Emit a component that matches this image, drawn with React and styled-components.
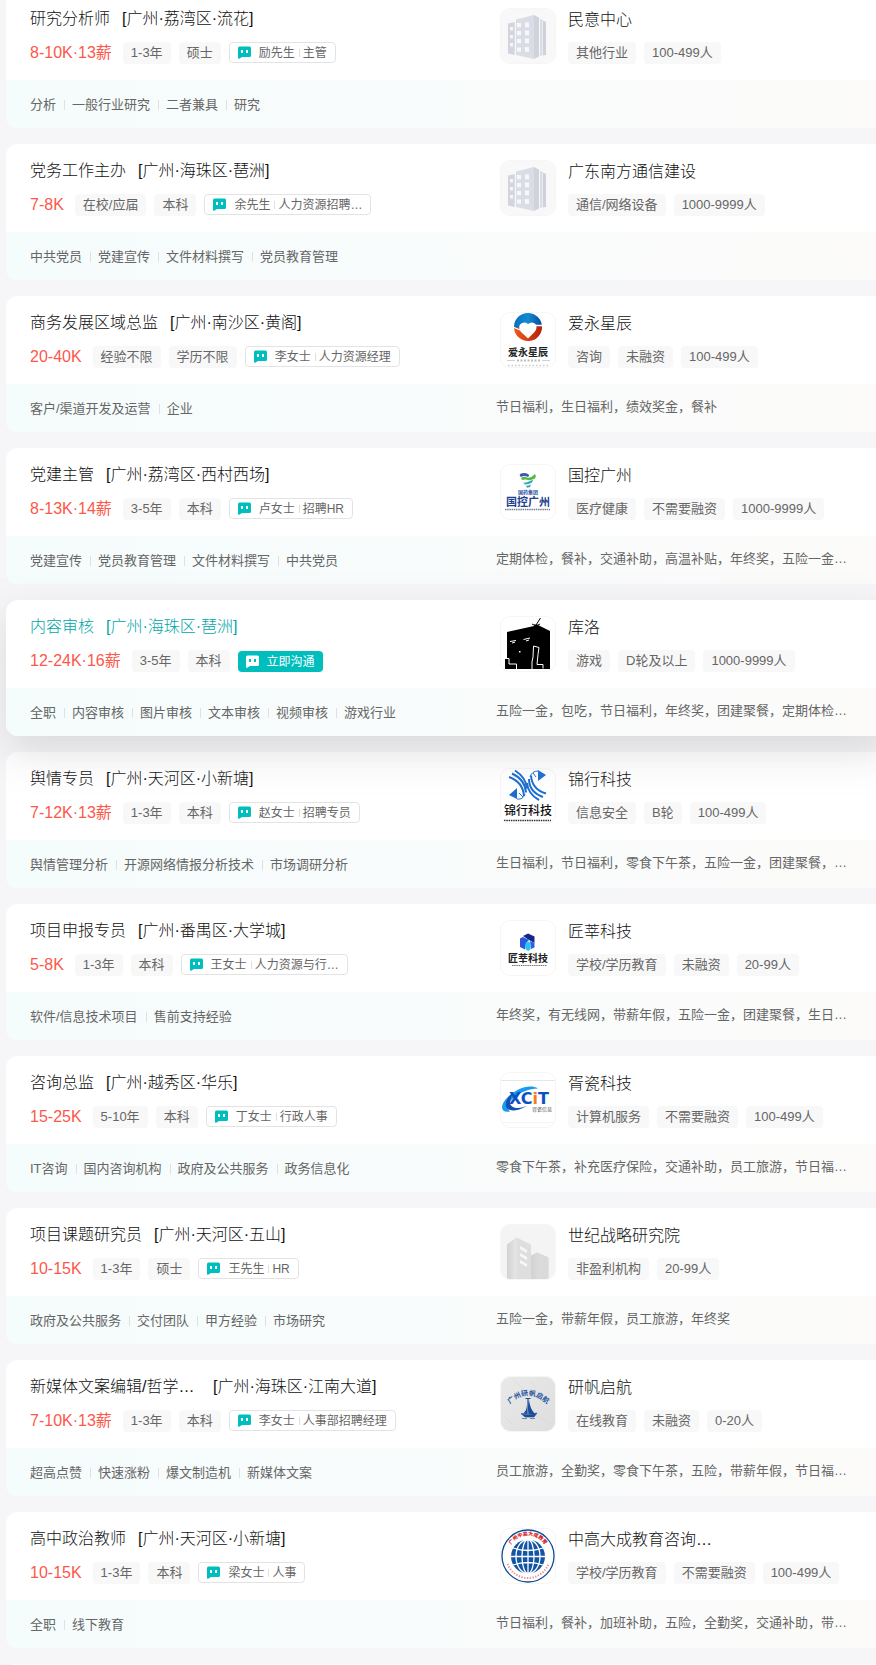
import React from "react";
import styled, { createGlobalStyle, css } from "styled-components";

const SANS = `"Liberation Sans", "Noto Sans CJK SC", sans-serif`;

const GlobalStyle = createGlobalStyle`
  *, *::before, *::after { box-sizing: border-box; }
  body {
    margin: 0;
    background: #f6f6f8;
    color: #222;
    font-family: ${SANS};
    font-size: 13px;
  }
  a { color: inherit; text-decoration: none; }
  ul { margin: 0; padding: 0; list-style: none; }
  button { font-family: inherit; }
`;

const Page = styled.main`
  overflow: hidden;
`;

const JobList = styled.ul`
  display: flex;
  flex-direction: column;
  gap: 16px;
  margin: -8px -14px 0 6px;
`;

const Card = styled.li`
  border-radius: 12px;
  background: #fff;
  ${(p) =>
    p.$active &&
    css`
      position: relative;
      z-index: 1;
      box-shadow: 0 16px 40px rgba(153, 153, 153, 0.3);
    `}
`;

const NextCardEdge = styled.li`
  height: 1px;
  margin: 0 6px;
  background: #fff;
`;

const CardBody = styled.div`
  display: grid;
  grid-template-columns: 470px minmax(0, 1fr);
  padding: 16px 24px;
`;

const CardFooter = styled.div`
  display: grid;
  grid-template-columns: 466px minmax(0, 1fr);
  height: 48px;
  padding: 0 24px;
  border-radius: 0 0 12px 12px;
  background: linear-gradient(90deg, #f5fcfc 0%, #fcfbfa 100%);
  color: #666;
`;

const JobTitle = styled.a`
  display: flex;
  gap: 12px;
  height: 22px;
  margin-bottom: 12px;
  font-size: 16px;
  font-weight: 300;
  line-height: 22px;
  white-space: nowrap;
  color: ${(p) => (p.$active ? "#00a6a7" : "#111")};
`;

const JobName = styled.span`
  ${(p) => p.$clipped && "width: 171px;"}
`;

const Row = styled.div`
  display: flex;
  align-items: flex-start;
  gap: 8px;
  height: 22px;
  white-space: nowrap;
`;

const Salary = styled.span`
  margin-right: 3px;
  font-size: 16px;
  line-height: 22px;
  color: #fe574a;
`;

const Tag = styled.span`
  height: 22px;
  padding: 0 8px;
  border-radius: 4px;
  background: #f8f8f8;
  color: #666;
  font-size: 13px;
  line-height: 22px;
`;

const ChatButton = styled.button`
  display: flex;
  align-items: center;
  height: 21px;
  padding: 0 8px;
  border: 1px solid #e3e3e3;
  border-radius: 4px;
  background: #fff;
  color: #666;
  font-size: 12px;
  line-height: 18px;
  cursor: pointer;
  svg {
    margin-right: 8px;
    color: #00bebd;
  }
  ${(p) =>
    p.$active &&
    css`
      align-self: flex-end;
      border: 0;
      background: #00bebd;
      color: #fff;
      svg {
        color: #fff;
      }
    `}
`;

const RecruiterRole = styled.span`
  display: flex;
  align-items: center;
  &::before {
    content: "";
    width: 1px;
    height: 8px;
    margin: 0 3px 0 4px;
    background: #e0e0e0;
  }
`;

const Skills = styled.ul`
  display: flex;
  padding-top: 1px;
  line-height: 48px;
  white-space: nowrap;
`;

const Skill = styled.li`
  display: flex;
  align-items: center;
  & + &::before {
    content: "";
    width: 1px;
    height: 10px;
    margin: 0 7px 0 8px;
    background: #e0e0e0;
  }
`;

const Benefits = styled.div`
  overflow: hidden;
  line-height: 46px;
  white-space: nowrap;
`;

const Company = styled.div`
  display: flex;
  gap: 12px;
`;

const LogoFrame = styled.a`
  flex: none;
  display: block;
  width: 56px;
  height: 56px;
  border: 1px solid #f6f6f6;
  border-radius: 10px;
  overflow: hidden;
  svg {
    display: block;
  }
`;

const CompanyName = styled.a`
  display: block;
  height: 24px;
  margin-bottom: 10px;
  font-size: 16px;
  font-weight: 300;
  line-height: 24px;
  white-space: nowrap;
  color: #111;
`;

const ChatIcon = ({ eyes }) => (
  <svg width="13" height="13" viewBox="0 0 13 13" aria-hidden="true">
    <path
      d="M1.5 0.5h10A1.5 1.5 0 0 1 13 2v7.5a1.5 1.5 0 0 1-1.5 1.5H4L1.2 12.8Q0 13 0 12V2A1.5 1.5 0 0 1 1.5.5z"
      fill="currentColor"
    />
    <rect x="3" y="4" width="2" height="3" fill={eyes} />
    <rect x="8" y="4" width="2" height="3" fill={eyes} />
  </svg>
);

const LogoSvg = ({ children }) => (
  <svg width="54" height="54" viewBox="0 0 54 54" fill="none" aria-hidden="true">
    {children}
  </svg>
);

const Word = ({ x = 27, y, size, fill, weight = 700, children }) => (
  <text
    x={x}
    y={y}
    fontSize={size}
    fontWeight={weight}
    fill={fill}
    textAnchor="middle"
    fontFamily={`"Noto Sans CJK SC", sans-serif`}
  >
    {children}
  </text>
);

const OfficeLogo = () => (
  <LogoSvg>
    <rect width="54" height="54" fill="#f8f8f8" />
    <path d="M7 14.500L13.700 13v33L7 44.500z" fill="#d2d5de" />
    <path d="M15 10.500L33 6v44L15 46z" fill="#dadde5" />
    <path d="M33 6l5 2.500v39L33 50z" fill="#d0d3dc" />
    <path d="M39 9.500l2.500 1.500v35.500L39 47z" fill="#dadde5" />
    <path d="M42 11.500l3 1.500v33l-3 .5z" fill="#cfd2db" />
    <g fill="#f8f8f8">
      {[18, 26, 34].map((y) => (
        <rect key={y} x="9" y={y} width="3" height="3.500" />
      ))}
      {[14, 22, 30, 38.500].map((y) => (
        <React.Fragment key={y}>
          <rect x="16" y={y} width="4" height="4.200" />
          <rect x="24" y={y - 0.5} width="4" height="4.800" />
        </React.Fragment>
      ))}
    </g>
  </LogoSvg>
);

const TowerLogo = () => (
  <LogoSvg>
    <defs>
      <linearGradient id="tower-a" x1="0" x2="1">
        <stop stopColor="#d2d2d2" />
        <stop offset="1" stopColor="#e6e6e6" />
      </linearGradient>
    </defs>
    <rect width="54" height="54" fill="#f4f4f4" />
    <path d="M6 19.500l9.500-7L30 19.500V54H6z" fill="#dedede" />
    <path d="M6 19.500l9.500-7V54H6z" fill="url(#tower-a)" />
    <path d="M30 30.500l6-3 11.500 5V54H30z" fill="url(#tower-a)" />
    <path d="M36 27.500l11.500 5V54H36z" fill="#dadada" />
    <path d="M19 21l7 4v3l-7-4zM19 28l7 4v3l-7-4zM19 35l7 4v3l-7-4z" fill="#f8f8f8" />
  </LogoSvg>
);

const AiyongLogo = () => (
  <LogoSvg>
    <defs>
      <linearGradient id="ay-blue" x1="0" x2="1">
        <stop stopColor="#0b6dbb" />
        <stop offset=".5" stopColor="#128bd2" />
        <stop offset="1" stopColor="#064c9c" />
      </linearGradient>
      <linearGradient id="ay-red" x1="0" x2="1">
        <stop stopColor="#f05a1c" />
        <stop offset="1" stopColor="#b81f08" />
      </linearGradient>
    </defs>
    <path d="M13 15a14 14 0 0 1 28-2L27 17z" fill="url(#ay-blue)" />
    <path d="M13 15a14 14 0 0 0 28-2L27 14z" fill="url(#ay-red)" />
    <path d="M12 14l7 3M42 12.500l-7 0" stroke="#fff" strokeWidth="1.300" />
    <path d="M27 25.500L20 19Q17 15 19 11.500 23 8 27 11q4-3 7.500 0 2.500 4-1 8z" fill="#fff" />
    <Word y="43" size="10" fill="#222">爱永星辰</Word>
    <path d="M6 47.500h8M41 47.500h8" stroke="#bbb" strokeWidth=".7" />
    <path d="M16 47.500h23" stroke="#bbb" strokeWidth="2" strokeDasharray="2 1.500" />
    <path d="M7 52.500h41" stroke="#ccc" strokeWidth="1.500" strokeDasharray="1.500 2" />
  </LogoSvg>
);

const GuokongLogo = () => (
  <LogoSvg>
    <path d="M19 9q4-2 8 0 2 1.500 0 3-4-2-7 0-2-1-1-3z" fill="#4058ae" />
    <path d="M20 13q3-2 6-.5 4 1 8-3.500 2 3-1 5-4 2-8 .5-3 0-4 .5z" fill="#55b947" />
    <path d="M22 17.500q4 .5 6-1 3-2 4-1.500l-1 2.500q-3 2-7 2z" fill="#26afa5" />
    <path d="M25 20.500q3 .5 5-1l-1 2.500-3 .8z" fill="#2c9bd4" />
    <Word y="29" size="5" fill="#3157a5">国药集团</Word>
    <Word y="41" size="11" fill="#1d418e">国控广州</Word>
    <path d="M4 44.500h45" stroke="#777e95" strokeWidth="1.500" strokeDasharray="1.500 .7" />
  </LogoSvg>
);

const KuroLogo = () => (
  <LogoSvg>
    <path d="M6 15l27-6 3-1.500L49 14v38H22L4 52V42h2z" fill="#000" />
    <path d="M35 8l4.500-7M31 7l4 2 4-2" stroke="#000" strokeWidth="1" />
    <path d="M33 7.500h3v3h-3z" fill="#000" />
    <g stroke="#fff" strokeWidth="1">
      <path d="M4 41.500h4v5.500h7.500v5" />
      <path d="M31 52v-7l1-5 .5-11 5.500 1.500-1 7-1 10h6v4" />
      <path d="M9 24.500l6-1M11 26l3-.8M22.500 22.500l6.500-1.500M25 24l3-1" />
    </g>
    <rect x="18" y="34" width="1.500" height="1.500" fill="#fff" />
  </LogoSvg>
);

const JinhangLogo = () => (
  <LogoSvg>
    <g stroke="#1c6fd0" strokeWidth="2">
      <path d="M8 8q14 5 15 19" />
      <path d="M11 4.500q13 6 14 19" />
      <path d="M14 1.500q11 7 12 18" />
      <path d="M45 24.500q-14-4-15-18" />
      <path d="M42 28q-14-5-14-18" />
      <path d="M38 31q-11-6-12-17" />
    </g>
    <path d="M37 1l8 5-8 6zM16 19v11l-8-4z" fill="#1c6fd0" />
    <g stroke="#1c6fd0" strokeWidth="1">
      <path d="M37 2q-6 0-8 6M16 30q6 1 8-5M32 4l3 4M18 24l4 4" />
    </g>
    <Word y="46" size="12" fill="#111" weight="500">锦行科技</Word>
    <path d="M3 51.500h47" stroke="#333" strokeWidth="1.500" strokeDasharray="1.500 .8" />
  </LogoSvg>
);

const JiangshenLogo = () => (
  <LogoSvg>
    <path d="M22 15l5-2.500 6.500 3V22L28 19z" fill="#12288a" />
    <path d="M19 17.500l3-1.500 6 3-3 3-1 6.500-5-2.500z" fill="#2a59db" />
    <path d="M29 20l4.500 2v4.500L30 28z" fill="#2e5fe4" />
    <path d="M24.500 28q-1-7 3-7.500 2.500 0 2 8L27 30z" fill="#22c7f4" />
    <Word y="41" size="10" fill="#222">匠莘科技</Word>
    <path d="M11 44.500h35" stroke="#777" strokeWidth="1" strokeDasharray="1.500 .7" />
  </LogoSvg>
);

const XcitLogo = () => (
  <LogoSvg>
    <path d="M0 7.500h54" stroke="#e6e6e6" />
    <path d="M0 49.500h54" stroke="#f4f4f4" />
    <path d="M37 15.500C24 8 2 24 1 34q0 6 8 4.500C2 33 14 17 37 15.500z" fill="#1a9bf0" />
    <path d="M13 19C-2 30 4 45 26 33c-8 3-16 3-17-3q0-5 4-11z" fill="#1350b4" />
    <text y="31" fontSize="16" fontWeight="700" fontFamily={`"DejaVu Sans", sans-serif`} fill="#0d51c0">
      <tspan x="8">XC</tspan>
      <tspan fill="#f47b20">i</tspan>
      <tspan>T</tspan>
    </text>
    <Word x="41" y="38" size="5" fill="#555" weight="400">胥瓷信息</Word>
  </LogoSvg>
);

const YanfanLogo = () => (
  <LogoSvg>
    <defs>
      <linearGradient id="marble" x1="0" y1="0" x2="1" y2="1">
        <stop stopColor="#e9e9e8" />
        <stop offset="1" stopColor="#dededf" />
      </linearGradient>
      <path id="yanfan-arc" d="M9 27Q27 10 46 27" />
    </defs>
    <rect width="54" height="54" fill="url(#marble)" />
    <path d="M12 3l14 12M30 4l6 8M34 38l16 8M4 40l8 8" stroke="#d6d6d6" strokeWidth=".6" />
    <text fontSize="7" fontWeight="700" fill="#24569f" textAnchor="middle" fontFamily={`"Noto Sans CJK SC", sans-serif`}>
      <textPath href="#yanfan-arc" startOffset="50%">广州研帆启航</textPath>
    </text>
    <path d="M27 21v16M24.500 21.500h5" stroke="#1d4d98" strokeWidth="1.200" />
    <path d="M28 23q1 9 6 14l-6 0q-2-6 0-14zM26 27q0 7-4 9.500l4 .5z" fill="#1d4d98" />
    <path d="M20 36.500q8 2 16-.5l-3 4h-9zM21 41.500h5M29 41.500h5" fill="#1d4d98" stroke="#1d4d98" strokeWidth=".6" />
  </LogoSvg>
);

const ZhonggaoLogo = () => (
  <LogoSvg>
    <defs>
      <path id="zg-arc" d="M7.500 22A20 20 0 0 1 46.500 22" />
    </defs>
    <circle cx="27" cy="27" r="26" fill="#fff" stroke="#0d4b96" strokeWidth="1.300" />
    <circle cx="27" cy="27.500" r="17" fill="#1355a2" />
    <g stroke="#fff" strokeWidth="1.300">
      <path d="M9 27.500h36M27 10v35M12 19q15 5 30 0M12 36q15-5 30 0" />
      <ellipse cx="27" cy="27.500" rx="6" ry="17" />
      <ellipse cx="27" cy="27.500" rx="12" ry="17" />
    </g>
    <text fontSize="5" fontWeight="900" fill="#d8232a" textAnchor="middle" fontFamily={`"Noto Sans CJK SC", sans-serif`}>
      <textPath href="#zg-arc" startOffset="50%">广州中高大成教育</textPath>
    </text>
    <path d="M6.500 35A22 22 0 0 0 47.500 35" stroke="#ee8a8c" strokeWidth="2" strokeDasharray="1.300 1.500" />
  </LogoSvg>
);

const jobs = [
  {
    name: "研究分析师", area: "[广州·荔湾区·流花]", salary: "8-10K·13薪", tags: ["1-3年", "硕士"],
    hr: ["励先生", "主管"], skills: ["分析", "一般行业研究", "二者兼具", "研究"],
    company: "民意中心", facts: ["其他行业", "100-499人"], Logo: OfficeLogo, benefits: "",
  },
  {
    name: "党务工作主办", area: "[广州·海珠区·琶洲]", salary: "7-8K", tags: ["在校/应届", "本科"],
    hr: ["余先生", "人力资源招聘…"], skills: ["中共党员", "党建宣传", "文件材料撰写", "党员教育管理"],
    company: "广东南方通信建设", facts: ["通信/网络设备", "1000-9999人"], Logo: OfficeLogo, benefits: "",
  },
  {
    name: "商务发展区域总监", area: "[广州·南沙区·黄阁]", salary: "20-40K", tags: ["经验不限", "学历不限"],
    hr: ["李女士", "人力资源经理"], skills: ["客户/渠道开发及运营", "企业"],
    company: "爱永星辰", facts: ["咨询", "未融资", "100-499人"], Logo: AiyongLogo,
    benefits: "节日福利，生日福利，绩效奖金，餐补",
  },
  {
    name: "党建主管", area: "[广州·荔湾区·西村西场]", salary: "8-13K·14薪", tags: ["3-5年", "本科"],
    hr: ["卢女士", "招聘HR"], skills: ["党建宣传", "党员教育管理", "文件材料撰写", "中共党员"],
    company: "国控广州", facts: ["医疗健康", "不需要融资", "1000-9999人"], Logo: GuokongLogo,
    benefits: "定期体检，餐补，交通补助，高温补贴，年终奖，五险一金…",
  },
  {
    name: "内容审核", area: "[广州·海珠区·琶洲]", salary: "12-24K·16薪", tags: ["3-5年", "本科"],
    active: true, skills: ["全职", "内容审核", "图片审核", "文本审核", "视频审核", "游戏行业"],
    company: "库洛", facts: ["游戏", "D轮及以上", "1000-9999人"], Logo: KuroLogo,
    benefits: "五险一金，包吃，节日福利，年终奖，团建聚餐，定期体检…",
  },
  {
    name: "舆情专员", area: "[广州·天河区·小新塘]", salary: "7-12K·13薪", tags: ["1-3年", "本科"],
    hr: ["赵女士", "招聘专员"], skills: ["舆情管理分析", "开源网络情报分析技术", "市场调研分析"],
    company: "锦行科技", facts: ["信息安全", "B轮", "100-499人"], Logo: JinhangLogo,
    benefits: "生日福利，节日福利，零食下午茶，五险一金，团建聚餐，…",
  },
  {
    name: "项目申报专员", area: "[广州·番禺区·大学城]", salary: "5-8K", tags: ["1-3年", "本科"],
    hr: ["王女士", "人力资源与行…"], skills: ["软件/信息技术项目", "售前支持经验"],
    company: "匠莘科技", facts: ["学校/学历教育", "未融资", "20-99人"], Logo: JiangshenLogo,
    benefits: "年终奖，有无线网，带薪年假，五险一金，团建聚餐，生日…",
  },
  {
    name: "咨询总监", area: "[广州·越秀区·华乐]", salary: "15-25K", tags: ["5-10年", "本科"],
    hr: ["丁女士", "行政人事"], skills: ["IT咨询", "国内咨询机构", "政府及公共服务", "政务信息化"],
    company: "胥瓷科技", facts: ["计算机服务", "不需要融资", "100-499人"], Logo: XcitLogo,
    benefits: "零食下午茶，补充医疗保险，交通补助，员工旅游，节日福…",
  },
  {
    name: "项目课题研究员", area: "[广州·天河区·五山]", salary: "10-15K", tags: ["1-3年", "硕士"],
    hr: ["王先生", "HR"], skills: ["政府及公共服务", "交付团队", "甲方经验", "市场研究"],
    company: "世纪战略研究院", facts: ["非盈利机构", "20-99人"], Logo: TowerLogo,
    benefits: "五险一金，带薪年假，员工旅游，年终奖",
  },
  {
    name: "新媒体文案编辑/哲学…", clipped: true, area: "[广州·海珠区·江南大道]", salary: "7-10K·13薪",
    tags: ["1-3年", "本科"], hr: ["李女士", "人事部招聘经理"],
    skills: ["超高点赞", "快速涨粉", "爆文制造机", "新媒体文案"],
    company: "研帆启航", facts: ["在线教育", "未融资", "0-20人"], Logo: YanfanLogo,
    benefits: "员工旅游，全勤奖，零食下午茶，五险，带薪年假，节日福…",
  },
  {
    name: "高中政治教师", area: "[广州·天河区·小新塘]", salary: "10-15K", tags: ["1-3年", "本科"],
    hr: ["梁女士", "人事"], skills: ["全职", "线下教育"],
    company: "中高大成教育咨询…", facts: ["学校/学历教育", "不需要融资", "100-499人"], Logo: ZhonggaoLogo,
    benefits: "节日福利，餐补，加班补助，五险，全勤奖，交通补助，带…",
  },
];

function JobCard({ job }) {
  const { Logo, active } = job;
  return (
    <Card $active={active}>
      <CardBody>
        <div>
          <JobTitle href="#job" $active={active}>
            <JobName $clipped={job.clipped}>{job.name}</JobName>
            <span>{job.area}</span>
          </JobTitle>
          <Row>
            <Salary>{job.salary}</Salary>
            {job.tags.map((t) => (
              <Tag key={t}>{t}</Tag>
            ))}
            <ChatButton type="button" $active={active}>
              <ChatIcon eyes={active ? "#00bebd" : "#fff"} />
              {active ? (
                "立即沟通"
              ) : (
                <>
                  <span>{job.hr[0]}</span>
                  <RecruiterRole>{job.hr[1]}</RecruiterRole>
                </>
              )}
            </ChatButton>
          </Row>
        </div>
        <Company>
          <LogoFrame href="#company" aria-label={job.company}>
            <Logo />
          </LogoFrame>
          <div>
            <CompanyName href="#company">{job.company}</CompanyName>
            <Row>
              {job.facts.map((f) => (
                <Tag key={f}>{f}</Tag>
              ))}
            </Row>
          </div>
        </Company>
      </CardBody>
      <CardFooter>
        <Skills>
          {job.skills.map((s) => (
            <Skill key={s}>{s}</Skill>
          ))}
        </Skills>
        <Benefits>{job.benefits}</Benefits>
      </CardFooter>
    </Card>
  );
}

export default function App() {
  return (
    <Page>
      <GlobalStyle />
      <JobList>
        {jobs.map((job, i) => (
          <JobCard key={i} job={job} />
        ))}
        <NextCardEdge aria-hidden="true" />
      </JobList>
    </Page>
  );
}
